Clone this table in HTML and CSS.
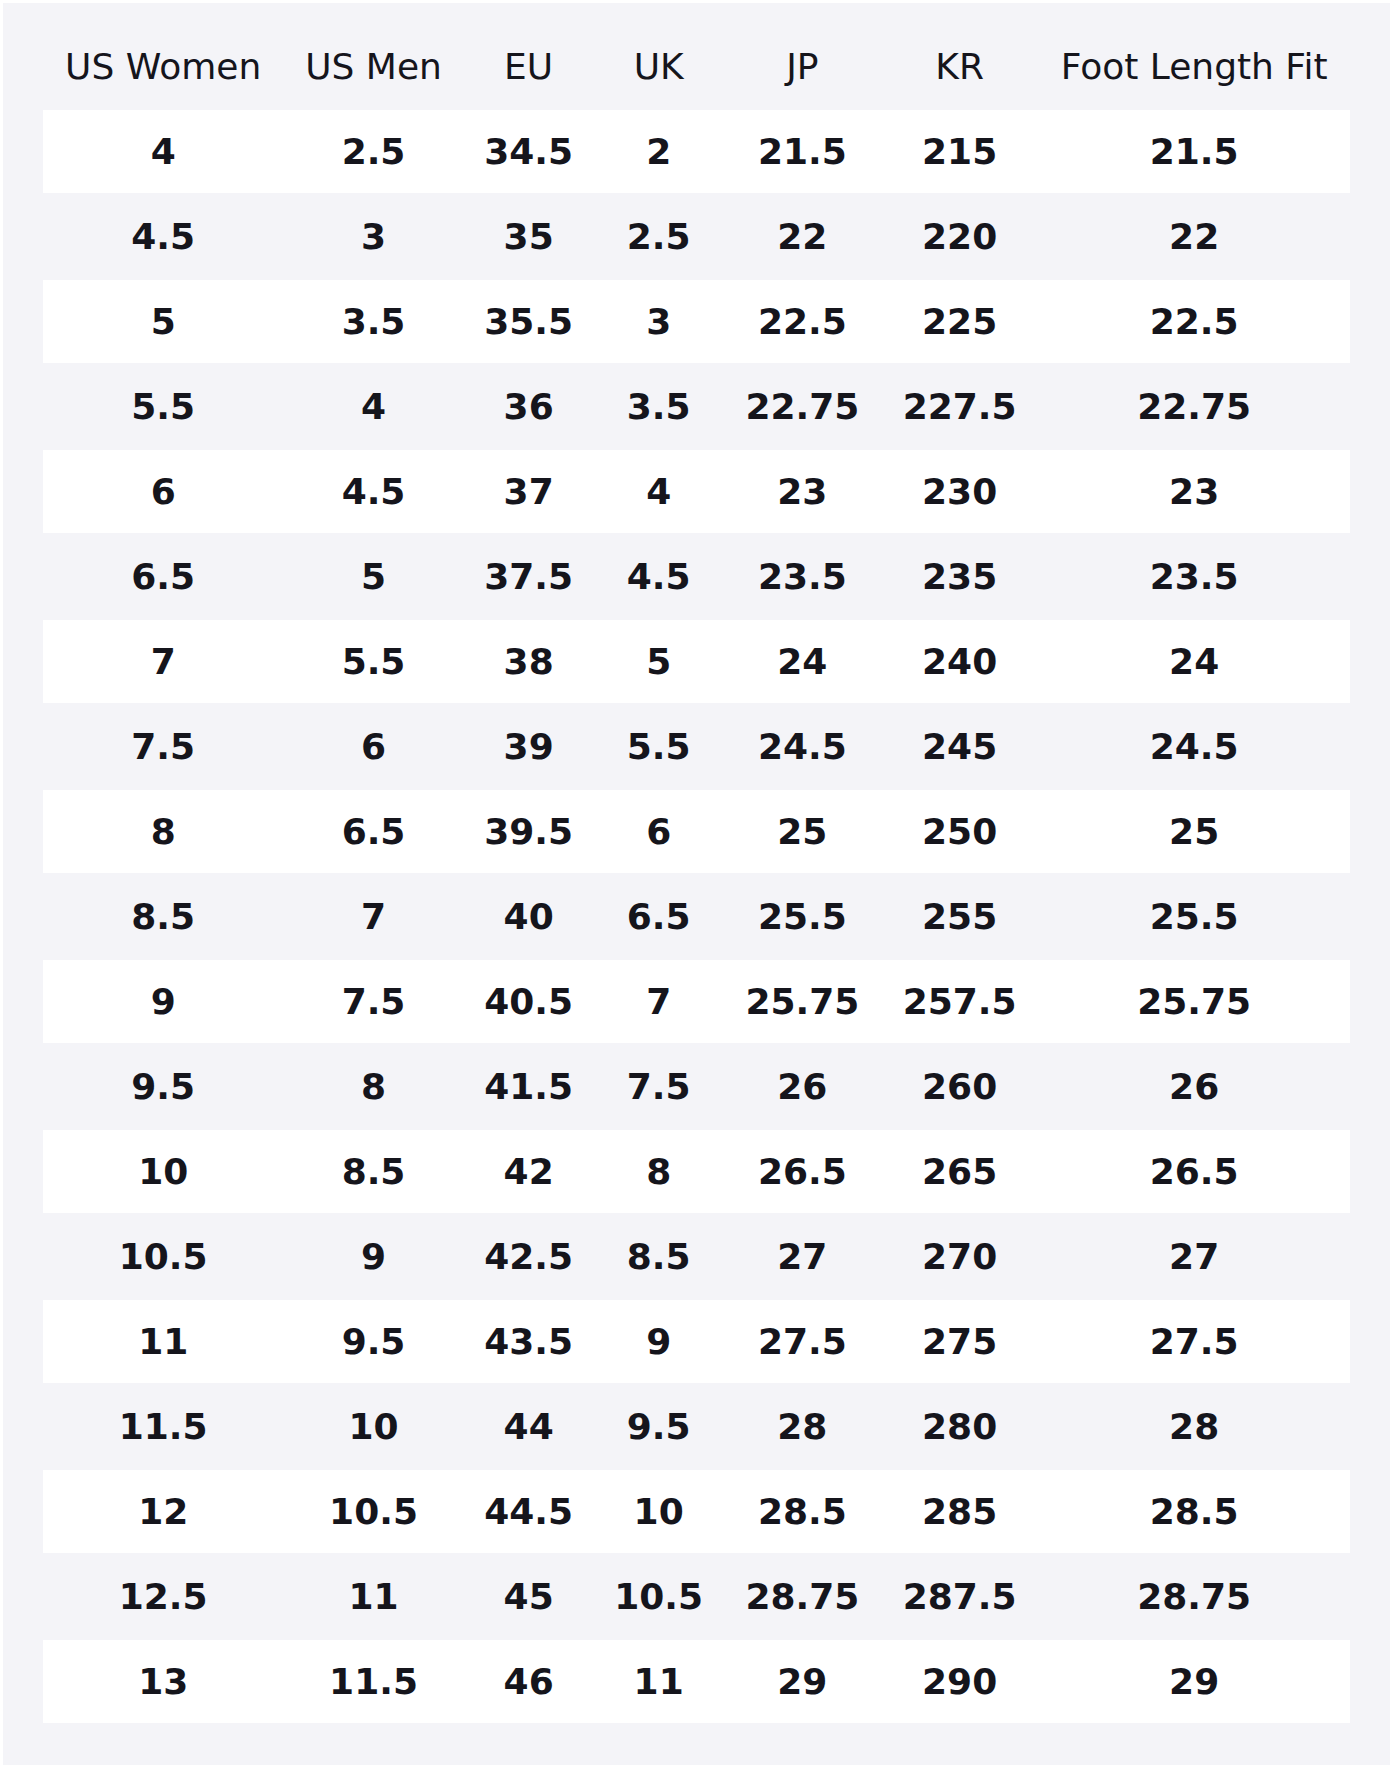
FILE: index.html
```html
<!DOCTYPE html>
<html lang="en">
<head>
<meta charset="utf-8">
<title>Size Chart</title>
<link rel="stylesheet" href="styles.css">
</head>
<body>
<div class="panel">
<table class="chart">
<thead>
<tr><th>US Women</th><th>US Men</th><th>EU</th><th>UK</th><th>JP</th><th>KR</th><th>Foot Length Fit</th></tr>
</thead>
<tbody>
<tr><td>4</td><td>2.5</td><td>34.5</td><td>2</td><td>21.5</td><td>215</td><td>21.5</td></tr>
<tr><td>4.5</td><td>3</td><td>35</td><td>2.5</td><td>22</td><td>220</td><td>22</td></tr>
<tr><td>5</td><td>3.5</td><td>35.5</td><td>3</td><td>22.5</td><td>225</td><td>22.5</td></tr>
<tr><td>5.5</td><td>4</td><td>36</td><td>3.5</td><td>22.75</td><td>227.5</td><td>22.75</td></tr>
<tr><td>6</td><td>4.5</td><td>37</td><td>4</td><td>23</td><td>230</td><td>23</td></tr>
<tr><td>6.5</td><td>5</td><td>37.5</td><td>4.5</td><td>23.5</td><td>235</td><td>23.5</td></tr>
<tr><td>7</td><td>5.5</td><td>38</td><td>5</td><td>24</td><td>240</td><td>24</td></tr>
<tr><td>7.5</td><td>6</td><td>39</td><td>5.5</td><td>24.5</td><td>245</td><td>24.5</td></tr>
<tr><td>8</td><td>6.5</td><td>39.5</td><td>6</td><td>25</td><td>250</td><td>25</td></tr>
<tr><td>8.5</td><td>7</td><td>40</td><td>6.5</td><td>25.5</td><td>255</td><td>25.5</td></tr>
<tr><td>9</td><td>7.5</td><td>40.5</td><td>7</td><td>25.75</td><td>257.5</td><td>25.75</td></tr>
<tr><td>9.5</td><td>8</td><td>41.5</td><td>7.5</td><td>26</td><td>260</td><td>26</td></tr>
<tr><td>10</td><td>8.5</td><td>42</td><td>8</td><td>26.5</td><td>265</td><td>26.5</td></tr>
<tr><td>10.5</td><td>9</td><td>42.5</td><td>8.5</td><td>27</td><td>270</td><td>27</td></tr>
<tr><td>11</td><td>9.5</td><td>43.5</td><td>9</td><td>27.5</td><td>275</td><td>27.5</td></tr>
<tr><td>11.5</td><td>10</td><td>44</td><td>9.5</td><td>28</td><td>280</td><td>28</td></tr>
<tr><td>12</td><td>10.5</td><td>44.5</td><td>10</td><td>28.5</td><td>285</td><td>28.5</td></tr>
<tr><td>12.5</td><td>11</td><td>45</td><td>10.5</td><td>28.75</td><td>287.5</td><td>28.75</td></tr>
<tr><td>13</td><td>11.5</td><td>46</td><td>11</td><td>29</td><td>290</td><td>29</td></tr>
</tbody>
</table>
</div>
</body>
</html>
```

FILE: styles.css
```css
html, body {
  margin: 0;
  padding: 0;
  background: #ffffff;
}

body {
  padding: 3px;
  font-family: "DejaVu Sans", sans-serif;
  color: #15151c;
}

.panel {
  background: #f4f4f8;
  padding: 40px;
}

.chart {
  width: 100%;
  border-collapse: separate;
  border-spacing: 0 2px;
  font-size: 36px;
  line-height: 42px;
}

.chart th {
  font-weight: normal;
  text-align: center;
  white-space: nowrap;
  padding: 1px 21px 20px;
}

.chart td {
  font-weight: bold;
  text-align: center;
  white-space: nowrap;
  padding: 21px 21px 20px;
}

.chart th:nth-child(3),
.chart th:nth-child(4),
.chart td:nth-child(3),
.chart td:nth-child(4) {
  padding-left: 20px;
  padding-right: 20px;
}

.chart tbody tr:nth-child(odd) td {
  background: #ffffff;
}
```
